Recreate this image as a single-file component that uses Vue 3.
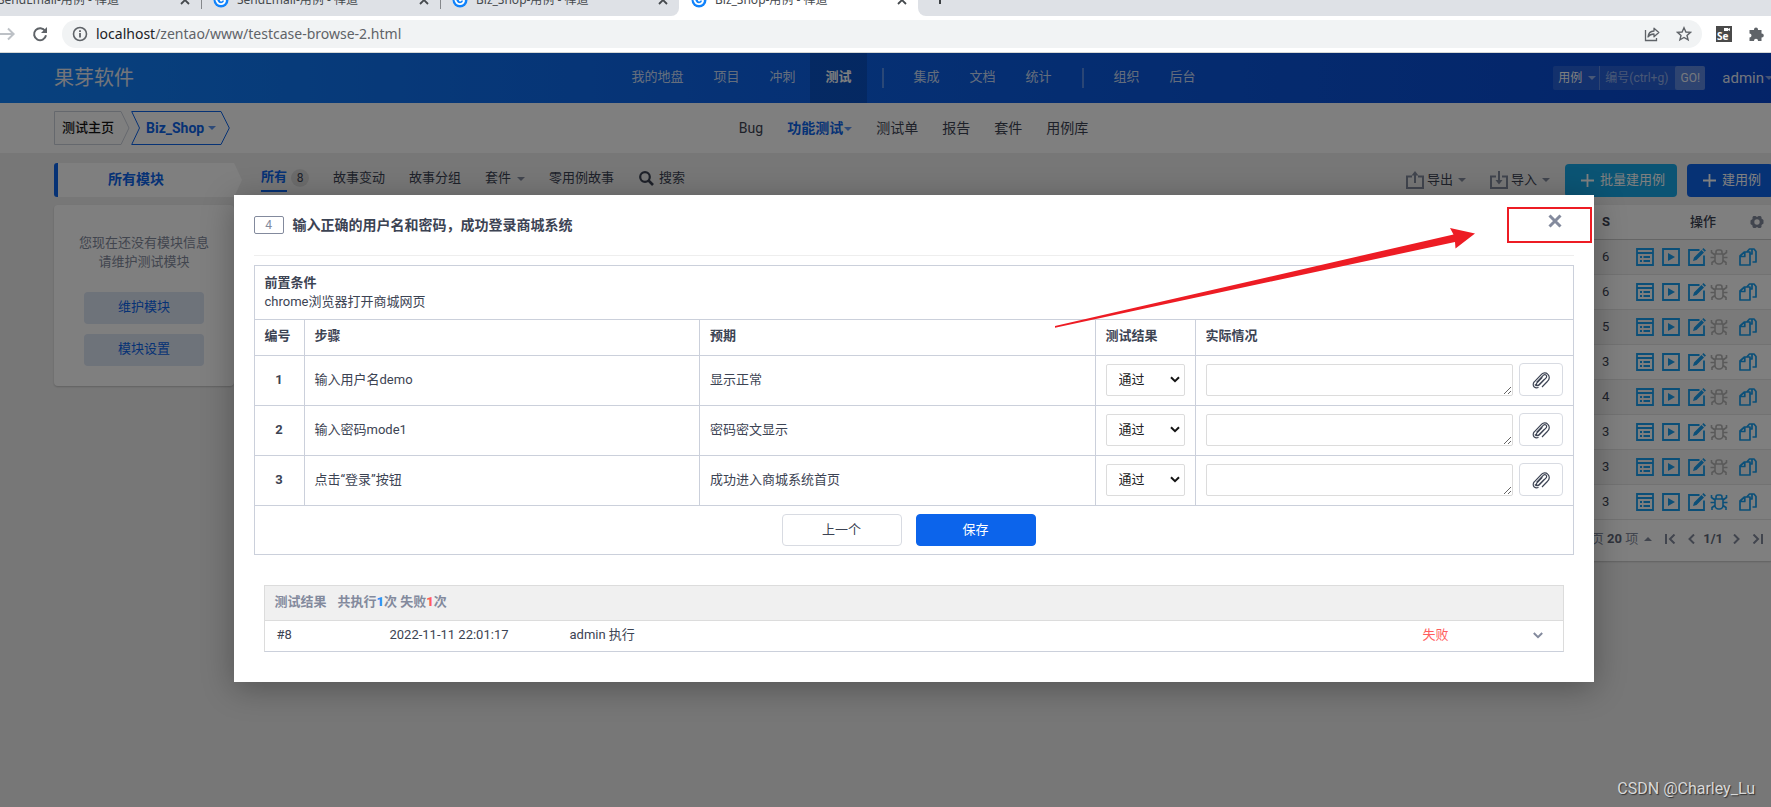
<script setup>
import { ref } from 'vue'

const tabs = [
  { title: 'SendEmail-用例 - 禅道', active: false },
  { title: 'SendEmail-用例 - 禅道', active: false },
  { title: 'Biz_Shop-用例 - 禅道', active: false },
  { title: 'Biz_Shop-用例 - 禅道', active: true }
]

const navGroups = [
  ['我的地盘', '项目', '冲刺', '测试'],
  ['集成', '文档', '统计'],
  ['组织', '后台']
]

const subMenu = ['Bug', '功能测试', '测试单', '报告', '套件', '用例库']

const cases = [
  { s: 6, bug: false },
  { s: 6, bug: false },
  { s: 5, bug: false },
  { s: 3, bug: false },
  { s: 4, bug: false },
  { s: 3, bug: false },
  { s: 3, bug: false },
  { s: 3, bug: true }
]

const steps = ref([
  { id: 1, desc: '输入用户名demo', expect: '显示正常', result: 'pass', real: '' },
  { id: 2, desc: '输入密码mode1', expect: '密码密文显示', result: 'pass', real: '' },
  { id: 3, desc: '点击“登录”按钮', expect: '成功进入商城系统首页', result: 'pass', real: '' }
])
</script>

<template>
  <div class="window">
    <div class="browser">
      <div class="tab-strip">
        <div v-for="(t, i) in tabs" :key="i" class="tab" :class="{ active: t.active, beside: i === 2 }">
          <svg class="favicon" viewBox="0 0 16 16" width="16" height="16">
            <circle cx="8" cy="8" r="7.5" fill="#1183fb" />
            <path d="M11.5 4.800A4.300 4.300 0 0 0 4 9.500a4.200 4.200 0 0 0 8-.500c.200-1.500-3-2-4.500.200" fill="none" stroke="#fff" stroke-width="1.800" />
          </svg>
          <span class="tab-title">{{ t.title }}</span>
          <button class="tab-close" aria-label="关闭标签页">
            <svg viewBox="0 0 10 10" width="10" height="10"><path d="M1 1l8 8M9 1l-8 8" stroke="#45494d" stroke-width="1.8" /></svg>
          </button>
        </div>
        <div class="tab-rest">
          <button class="tab-new" aria-label="新标签页">
            <svg viewBox="0 0 14 14" width="14" height="14"><path d="M7 1v12M1 7h12" stroke="#3c4043" stroke-width="2" /></svg>
          </button>
        </div>
      </div>
      <div class="address-bar">
        <svg viewBox="0 0 16 16" width="16" height="16"><path d="M0 8h13M8 2.5L13.6 8 8 13.5" fill="none" stroke="#bdc1c6" stroke-width="2" /></svg>
        <svg class="reload" viewBox="0 0 16 16" width="16" height="16">
          <path d="M13.2 5A6 6 0 1 0 14 9.3" fill="none" stroke="#5f6368" stroke-width="2" />
          <path d="M15 1v6H9z" fill="#5f6368" />
        </svg>
        <div class="omnibox">
          <svg viewBox="0 0 16 16" width="16" height="16">
            <circle cx="8" cy="8" r="6.5" fill="none" stroke="#5f6368" stroke-width="1.6" />
            <path d="M8 7v4.6M8 4.2v1.8" stroke="#5f6368" stroke-width="1.8" />
          </svg>
          <span class="url"><b>localhost</b>/zentao/www/testcase-browse-2.html</span>
          <svg class="share" viewBox="0 0 16 16" width="16" height="16">
            <path d="M1.5 4v10.5h11V12" fill="none" stroke="#5f6368" stroke-width="1.3" />
            <path d="M4 11c.3-4 2.5-5.800 6-6V2.200L14.800 6.500 10 10.800V8C7.500 8 5.500 8.800 4 11z" fill="none" stroke="#5f6368" stroke-width="1.3" stroke-linejoin="round" />
          </svg>
          <svg viewBox="0 0 16 16" width="16" height="16">
            <path d="M8 1.800l1.900 4.200 4.600.4-3.500 3 1.100 4.500L8 11.500l-4.100 2.400L5 9.400l-3.500-3 4.600-.4z" fill="none" stroke="#5f6368" stroke-width="1.4" />
          </svg>
        </div>
        <svg class="ext" viewBox="0 0 16 16" width="16" height="16">
          <rect width="16" height="16" fill="#4a4a4a" />
          <path d="M8 2h4v1l2-1v3l-2-1v1H8z" fill="#fff" />
          <text x="1" y="14" class="se">Se</text>
        </svg>
        <svg class="puzzle" viewBox="0 0 16 16" width="16" height="16">
          <path d="M6 3.500a2 2 0 0 1 4 0V4h3.500v3.500h.300a2 2 0 0 1 0 4h-.300V15H10v-.300a2 2 0 0 0-4 0V15H1.500v-3.500a2 2 0 0 0 0-4V4H6z" fill="#5f6368" />
        </svg>
      </div>
    </div>

    <div class="viewport">
      <div class="page">
        <header class="header">
          <div class="side"><a class="logo" href="#">果芽软件</a></div>
          <nav class="main-nav">
            <template v-for="(g, gi) in navGroups" :key="gi">
              <span v-if="gi" class="nav-divider"></span>
              <a v-for="n in g" :key="n" href="#" :class="{ current: n === '测试' }">{{ n }}</a>
            </template>
          </nav>
          <div class="side right">
            <form class="search" @submit.prevent>
              <button type="button" class="search-type">用例<i class="caret"></i></button>
              <input type="text" placeholder="编号(ctrl+g)" aria-label="编号" />
              <button type="submit" class="go">GO!</button>
            </form>
            <a class="user" href="#">admin<i class="caret"></i></a>
          </div>
        </header>

        <div class="subheader">
          <div class="side crumbs">
            <a href="#" class="crumb">
              <svg viewBox="0 0 76 34" width="76" height="34"><path d="M.5.500H67L75 17 67 33.500H.500z" fill="none" stroke="#cbd0db" /></svg>
              <span>测试主页</span>
            </a>
            <a href="#" class="crumb product">
              <svg viewBox="0 0 99 34" width="99" height="34"><path d="M.700.500H90L98.300 17 90 33.500H.700L8.500 17z" fill="none" stroke="#0c64eb" /></svg>
              <span>Biz_Shop<i class="caret"></i></span>
            </a>
          </div>
          <nav class="sub-nav">
            <a v-for="m in subMenu" :key="m" href="#" :class="{ current: m === '功能测试' }">{{ m }}<i v-if="m === '功能测试'" class="caret"></i></a>
          </nav>
          <div class="side"></div>
        </div>

        <div class="toolbar">
          <div class="module-title">
            <svg viewBox="0 0 188 34" width="188" height="34">
              <path d="M4 0H180L188 17 180 34H4z" fill="#fff" />
              <path d="M4 0H3a3 3 0 0 0-3 3v28a3 3 0 0 0 3 3h1z" fill="#0c64eb" />
            </svg>
            <span>所有模块</span>
          </div>
          <nav class="filters">
            <a href="#" class="all"><span>所有</span><em>8</em></a>
            <a href="#">故事变动</a>
            <a href="#">故事分组</a>
            <a href="#">套件<i class="caret"></i></a>
            <a href="#">零用例故事</a>
            <a href="#" class="find">
              <svg viewBox="0 0 15 15" width="15" height="15"><circle cx="6" cy="6" r="4.800" fill="none" stroke="#3c4353" stroke-width="2.200" /><path d="M9.500 9.500l4.500 4.500" stroke="#3c4353" stroke-width="2.600" /></svg>搜索
            </a>
          </nav>
          <div class="actions">
            <button class="link">
              <svg viewBox="0 0 18 18" width="18" height="18"><path d="M6 5.500H1V17h16V5.500h-5M9 12V2" fill="none" stroke="#838a9d" stroke-width="2" /><path d="M5.500 4.500L9 0l3.500 4.500z" fill="#838a9d" /></svg>
              导出<i class="caret"></i>
            </button>
            <button class="link">
              <svg viewBox="0 0 18 18" width="18" height="18"><path d="M6 5.500H1V17h16V5.500h-5M9 0v10" fill="none" stroke="#838a9d" stroke-width="2" /><path d="M5.500 9L9 13.500 12.500 9z" fill="#838a9d" /></svg>
              导入<i class="caret"></i>
            </button>
            <button class="solid cyan">
              <svg viewBox="0 0 13 13" width="13" height="13"><path d="M6.500 0v13M0 6.500h13" stroke="#fff" stroke-width="1.800" /></svg>批量建用例
            </button>
            <button class="solid">
              <svg viewBox="0 0 13 13" width="13" height="13"><path d="M6.500 0v13M0 6.500h13" stroke="#fff" stroke-width="1.800" /></svg>建用例
            </button>
          </div>
        </div>

        <div class="content">
          <aside class="sidebar">
            <p>您现在还没有模块信息<br />请维护测试模块</p>
            <button>维护模块</button>
            <button>模块设置</button>
          </aside>
          <main class="list">
            <table>
              <thead>
                <tr>
                  <td></td>
                  <th class="col-s">S</th>
                  <th class="col-ops">
                    <div>
                      <span>操作</span>
                      <svg viewBox="0 0 14 14" width="14" height="14"><path d="M3.500 1h2L7 2l1.500-1h2l1 1v1.500l2 1.500v3.500l-2 1.500V12l-1 1h-2L7 12l-1.500 1h-2l-1-1v-1.500L.500 9V5.500l2-1.500V2z" fill="#838a9d" /><circle cx="7" cy="7" r="2.700" fill="#fff" /></svg>
                    </div>
                  </th>
                </tr>
              </thead>
              <tbody>
                <tr v-for="(c, i) in cases" :key="i">
                  <td></td>
                  <td class="col-s">{{ c.s }}</td>
                  <td class="col-ops">
                    <div class="ops">
                      <button aria-label="结果">
                        <svg viewBox="0 0 18 18" width="18" height="18"><path d="M1 1h16v16H1zM1 5h16M7.500 9H14M7.500 13H14M4 9h2M4 13h2" fill="none" stroke="currentColor" stroke-width="1.800" /></svg>
                      </button>
                      <button aria-label="执行">
                        <svg viewBox="0 0 18 18" width="18" height="18"><path d="M1 1h16v16H1z" fill="none" stroke="currentColor" stroke-width="1.800" /><path d="M6 5l7 4-7 4z" fill="currentColor" /></svg>
                      </button>
                      <button aria-label="编辑">
                        <svg viewBox="0 0 18 18" width="18" height="18"><path d="M11.500 2H1v15h15V7.500" fill="none" stroke="currentColor" stroke-width="1.800" /><path d="M5 13l1-3.500 7.500-7.500 2.500 2.500L8.500 12zM14.200 1.300L15.500 0 18 2.500l-1.300 1.300z" fill="currentColor" /></svg>
                      </button>
                      <button aria-label="转Bug" :class="{ off: !c.bug }">
                        <svg viewBox="0 0 18 18" width="18" height="18"><path d="M5 6h8v6.500a3.500 3.500 0 0 1-3.500 3.500h-1A3.500 3.500 0 0 1 5 12.500zM6 6V4a2 2 0 0 1 2-2h2a2 2 0 0 1 2 2v2M1.500 2v2.500L5 7M16.500 2v2.500L13 7M.500 9.500H5M13 9.500h4.500M2 17v-2.500l3-2M16 17v-2.500l-3-2" fill="none" stroke="currentColor" stroke-width="1.600" /></svg>
                      </button>
                      <button aria-label="复制" class="copy">
                        <svg viewBox="0 0 18 18" width="18" height="18"><path d="M5.500 4H11v13H1V8zM5.800 4v4.500H1M8 3.800L10.500 1H15l2 2.500V14h-3.500M13 1.500V6h-2" fill="none" stroke="currentColor" stroke-width="1.700" stroke-linejoin="round" /></svg>
                      </button>
                    </div>
                  </td>
                </tr>
              </tbody>
            </table>
            <footer class="pager">
              <span>页 <b>20</b> 项</span>
              <i class="caret up"></i>
              <button aria-label="首页"><svg viewBox="0 0 11 10" width="11" height="10"><path d="M1 0v10M9.500.500L5 5l4.500 4.500" fill="none" stroke="#838a9d" stroke-width="2" /></svg></button>
              <button aria-label="上一页"><svg viewBox="0 0 7 10" width="7" height="10"><path d="M6 .500L1.500 5 6 9.500" fill="none" stroke="#838a9d" stroke-width="2" /></svg></button>
              <b>1/1</b>
              <button aria-label="下一页"><svg viewBox="0 0 7 10" width="7" height="10"><path d="M1 .500L5.500 5 1 9.500" fill="none" stroke="#838a9d" stroke-width="2" /></svg></button>
              <button aria-label="末页"><svg viewBox="0 0 11 10" width="11" height="10"><path d="M10 0v10M1.500.500L6 5 1.500 9.500" fill="none" stroke="#838a9d" stroke-width="2" /></svg></button>
            </footer>
          </main>
        </div>

        <div class="backdrop">
          <section class="modal" role="dialog" aria-labelledby="case-title">
            <header class="modal-head">
              <span class="case-id">4</span>
              <h2 id="case-title">输入正确的用户名和密码，成功登录商城系统</h2>
              <button class="close" aria-label="关闭">
                <svg viewBox="0 0 14 14" width="14" height="14"><path d="M1.500 1.500l11 11M12.500 1.500l-11 11" stroke="#838a9d" stroke-width="3" /></svg>
              </button>
            </header>
            <table class="steps">
              <colgroup>
                <col class="w-id" /><col /><col /><col class="w-result" /><col class="w-real" />
              </colgroup>
              <tbody>
                <tr>
                  <td colspan="5" class="pre"><b>前置条件</b><br />chrome浏览器打开商城网页</td>
                </tr>
                <tr class="heads">
                  <th>编号</th>
                  <th>步骤</th>
                  <th>预期</th>
                  <th>测试结果</th>
                  <th>实际情况</th>
                </tr>
                <tr v-for="s in steps" :key="s.id" class="step">
                  <th class="num">{{ s.id }}</th>
                  <td>{{ s.desc }}</td>
                  <td>{{ s.expect }}</td>
                  <td>
                    <div class="pick">
                      <select v-model="s.result" aria-label="测试结果">
                        <option value="pass">通过</option>
                        <option value="fail">失败</option>
                      </select>
                      <svg viewBox="0 0 10 7" width="10" height="7"><path d="M1 1.200l4 4 4-4" fill="none" stroke="#141414" stroke-width="2" /></svg>
                    </div>
                  </td>
                  <td>
                    <div class="real">
                      <textarea v-model="s.real" rows="1" aria-label="实际情况"></textarea>
                      <button aria-label="附件">
                        <svg viewBox="0 0 18 18" width="18" height="18"><path d="M4.500 11.500l7-7.300a1.800 1.800 0 0 1 2.600 2.600l-6.500 6.700a3.300 3.300 0 0 1-4.800 0M12.500 8.200L6.700 14a1.300 1.300 0 0 1-1.900-1.900L10.500 6M10 16l5.300-5.500a4.800 4.800 0 0 0 .4-7.400 4.200 4.200 0 0 0-6 .1L2.300 10.800a3.600 3.600 0 0 0 0 5.200 3.400 3.400 0 0 0 4.200.3" fill="none" stroke="#3c4353" stroke-width="1.200" /></svg>
                      </button>
                    </div>
                  </td>
                </tr>
                <tr>
                  <td colspan="5" class="submit">
                    <div>
                      <button>上一个</button>
                      <button class="primary">保存</button>
                    </div>
                  </td>
                </tr>
              </tbody>
            </table>
            <div class="results">
              <div class="results-head">测试结果<span>共执行<b class="blue">1</b>次 失败<b class="red">1</b>次</span></div>
              <div class="results-row">
                <span class="r-id">#8</span>
                <span class="r-date">2022-11-11 22:01:17</span>
                <span class="r-user">admin 执行</span>
                <span class="r-state">失败</span>
                <button aria-label="展开"><svg viewBox="0 0 10 7" width="10" height="7"><path d="M.800 1l4.200 4.200L9.200 1" fill="none" stroke="#838a9d" stroke-width="2" /></svg></button>
              </div>
            </div>
            <div class="callout"></div>
            <svg class="arrow" viewBox="0 0 420 100" width="420" height="100">
              <path d="M0 98L398.500 6.500 395 0 420 5.500 400.500 20.500 400 14 0 99.800z" fill="#ed1c24" />
            </svg>
          </section>
        </div>
      </div>
      <div class="watermark">CSDN @Charley_Lu</div>
    </div>
  </div>
</template>

<style>
body {
  margin: 0;
  overflow: hidden;
}
</style>

<style scoped>
* {
  box-sizing: border-box;
}
.window {
  display: flex;
  flex-direction: column;
  min-height: 100vh;
  overflow: hidden;
  font-family: Roboto, "Noto Sans CJK SC", sans-serif;
  font-size: 13px;
  line-height: 20px;
  color: #3c4353;
}
a {
  color: inherit;
  text-decoration: none;
}
button {
  font: inherit;
  color: inherit;
  background: none;
  border: 0;
  padding: 0;
  cursor: pointer;
}
svg {
  display: block;
  flex: none;
}
.caret {
  display: inline-block;
  border: 4px solid transparent;
  border-top-color: #838a9d;
  border-bottom: 0;
  vertical-align: middle;
}
.caret.up {
  border-top: 0;
  border-bottom: 4px solid #838a9d;
}

/* browser bar */
.browser {
  background: #fff;
  border-bottom: 1px solid #d5d8d6;
  font-family: "Noto Sans", "Noto Sans CJK SC", sans-serif;
}
.tab-strip {
  display: flex;
  height: 16px;
  overflow: hidden;
  background: #fff;
  margin-left: -38px;
}
.tab {
  display: flex;
  align-items: center;
  width: 239px;
  height: 32px;
  margin-top: -16px;
  padding: 0 11px 0 12px;
  background: #dee1e6;
  font-size: 12px;
  color: #45494d;
}
.tab + .tab:not(.active) {
  background: linear-gradient(#85888c, #85888c) 0 8px / 1px 17px no-repeat #dee1e6;
}
.tab.active {
  background: #fff;
}
.tab.beside {
  border-bottom-right-radius: 8px;
}
.tab-title {
  flex: 1;
  margin-left: 8px;
  white-space: nowrap;
}
.tab-rest {
  flex: 1;
  display: flex;
  align-items: center;
  height: 32px;
  margin-top: -16px;
  padding-left: 15px;
  background: #dee1e6;
  border-bottom-left-radius: 8px;
}
.tab-new {
  padding-bottom: 4px;
}
.address-bar {
  display: flex;
  align-items: center;
  height: 36px;
  padding-right: 7px;
}
.reload {
  margin: 0 14px 0 16px;
}
.omnibox {
  flex: 1;
  display: flex;
  align-items: center;
  height: 28px;
  margin-right: 14px;
  padding: 0 10px;
  border-radius: 14px;
  background: #f1f3f4;
}
.url {
  flex: 1;
  margin-left: 8px;
  font-size: 14px;
  color: #5f6368;
}
.url b {
  font-weight: 400;
  color: #202124;
}
.share {
  margin-right: 16px;
}
.ext {
  margin-right: 16px;
}
.se {
  font-family: "Noto Sans", sans-serif;
  font-size: 10px;
  font-weight: 700;
  fill: #fff;
}

/* page */
.viewport {
  position: relative;
  flex: 1;
  display: flex;
  overflow: hidden;
}
.page {
  position: relative;
  flex: none;
  width: calc(100% + 56px);
  background: #efefef;
}
.header,
.subheader {
  display: flex;
  align-items: center;
  height: 50px;
  padding: 0 54px;
}
.side {
  flex: 1 1 0;
  display: flex;
  align-items: center;
}
.side.right {
  justify-content: flex-end;
}
.header {
  background: linear-gradient(90deg, #1183fb 0%, #0c64eb 40%, #0846cf 100%);
  color: #fff;
}
.logo {
  font-size: 20px;
  color: #e6ebf5;
}
.main-nav {
  display: flex;
  align-items: center;
}
.main-nav a {
  padding: 0 15px;
  line-height: 48px;
  padding-bottom: 2px;
  color: rgba(255, 255, 255, 0.8);
}
.main-nav a.current {
  font-weight: 700;
  color: #fff;
  background: rgba(0, 0, 0, 0.15);
}
.nav-divider {
  width: 2px;
  height: 20px;
  margin: 0 15px;
  background: rgba(255, 255, 255, 0.3);
}
.header .caret {
  border-top-color: rgba(255, 255, 255, 0.5);
}
.search {
  display: flex;
  height: 24px;
  font-size: 12px;
  line-height: 24px;
  background: rgba(255, 255, 255, 0.12);
  border-radius: 2px;
}
.search-type {
  display: flex;
  align-items: center;
  gap: 6px;
  padding: 0 3px 0 5px;
  border-right: 1px solid rgba(255, 255, 255, 0.25);
}
.search input {
  width: 75px;
  padding: 0 0 0 5px;
  border: 0;
  background: none;
  color: #fff;
  font: inherit;
}
.search input::placeholder {
  color: rgba(255, 255, 255, 0.5);
}
.go {
  width: 30px;
  border-radius: 2px;
  background: rgba(255, 255, 255, 0.25);
  color: rgba(255, 255, 255, 0.9);
}
.user {
  display: flex;
  align-items: center;
  gap: 1px;
  margin-left: 17px;
  font-size: 15px;
  color: rgba(255, 255, 255, 0.9);
}
.subheader {
  background: #fff;
}
.crumbs {
  gap: 1px;
}
.crumb {
  display: grid;
  align-items: center;
  font-weight: 500;
  color: #141414;
}
.crumb > * {
  grid-area: 1 / 1;
}
.crumb span {
  display: flex;
  align-items: center;
  gap: 4px;
  padding-left: 8px;
}
.crumb.product {
  color: #0c64eb;
  font-size: 14px;
  font-weight: 700;
}
.crumb.product span {
  padding-left: 15px;
}
.product .caret,
.sub-nav .caret {
  border-top-color: #5c95f1;
}
.sub-nav {
  display: flex;
  gap: 24px;
  font-size: 14px;
}
.sub-nav .caret {
  margin-left: 1px;
}
.sub-nav .current {
  font-weight: 700;
  color: #0c64eb;
}
.toolbar {
  display: flex;
  align-items: center;
  height: 34px;
  margin: 10px 54px 8px;
}
.module-title {
  display: grid;
  align-items: center;
  width: 188px;
  font-size: 14px;
  font-weight: 700;
  color: #0c64eb;
}
.module-title > * {
  grid-area: 1 / 1;
}
.module-title span {
  padding: 0 0 2px 54px;
}
.filters {
  flex: 1;
  display: flex;
  align-items: center;
  gap: 24px;
  height: 34px;
  padding-bottom: 4px;
  margin-left: 19px;
}
.filters .caret {
  margin-left: 6px;
}
.all {
  display: flex;
  align-items: center;
  gap: 4px;
}
.all span {
  font-weight: 700;
  color: #0c64eb;
  line-height: 26px;
  border-bottom: 2px solid #0c64eb;
}
.all em {
  width: 18px;
  height: 18px;
  border-radius: 9px;
  background: #d9d9d9;
  font-size: 12px;
  font-style: normal;
  line-height: 18px;
  text-align: center;
}
.find {
  display: flex;
  align-items: center;
  gap: 5px;
  margin-left: 1px;
}
.actions {
  display: flex;
  align-items: center;
}
.link {
  display: flex;
  align-items: center;
  gap: 3px;
  margin-right: 24px;
}
.link .caret {
  margin-left: 2px;
}
.link + .solid {
  margin-left: -9px;
}
.solid {
  display: flex;
  align-items: center;
  gap: 6px;
  height: 33px;
  padding: 0 12px 0 16px;
  border-radius: 4px;
  background: #0c64eb;
  color: #fff;
}
.solid.cyan {
  margin-right: 10px;
  background: #16a8e8;
}
.content {
  display: flex;
  align-items: flex-start;
  gap: 27px;
  margin: 0 54px;
}
.sidebar {
  display: flex;
  flex-direction: column;
  align-items: center;
  gap: 10px;
  width: 180px;
  height: 181px;
  padding-top: 28px;
  border-radius: 4px;
  background: #fff;
  box-shadow: 0 1px 2px rgba(0, 0, 0, 0.2);
  text-align: center;
  color: #838a9d;
}
.sidebar p {
  margin: 0 0 11px;
  line-height: 19px;
}
.sidebar button {
  width: 120px;
  height: 32px;
  padding-bottom: 2px;
  border-radius: 4px;
  background: #dce6f4;
  color: #0c64eb;
}
.list {
  flex: 1;
  background: #fff;
  border-radius: 4px;
  box-shadow: 0 1px 2px rgba(0, 0, 0, 0.2);
}
.list table {
  width: 100%;
  border-collapse: collapse;
}
.list tr {
  height: 35px;
}
.list thead tr {
  height: 34px;
}
.list td,
.list th {
  padding: 0;
  border-bottom: 1px solid #e5e5e5;
}
.list thead tr > * {
  border-bottom-color: #cbcbcb;
}
.list tbody tr:nth-child(odd) {
  background: #f5f5f5;
}
.col-s {
  width: 34px;
  text-align: left;
}
.col-ops {
  width: 137px;
}
.col-ops > div {
  display: flex;
  align-items: center;
}
th.col-ops > div {
  justify-content: flex-end;
  gap: 34px;
  padding-right: 9px;
  font-weight: 500;
}
.ops {
  gap: 8px;
  color: #169ef0;
}
.ops .off {
  color: #b4b4b4;
}
.ops button:nth-child(4) {
  margin-left: -4px;
}
.ops .copy {
  margin-left: 3px;
}
.pager {
  display: flex;
  align-items: center;
  justify-content: flex-end;
  height: 41px;
  padding: 0 10px 3px 0;
  color: #838a9d;
}
.pager .caret {
  margin: 0 13px 0 6px;
}
.pager b {
  color: #606779;
}
.pager button + button {
  margin-left: 12px;
}
.pager button + b {
  margin: 0 10px 0 8px;
}

/* dialog */
.backdrop {
  position: absolute;
  inset: 0;
  background: rgba(0, 0, 0, 0.5);
}
.modal {
  position: relative;
  width: 94%;
  max-width: 1360px;
  margin: 142px auto 0;
  padding: 0 20px 30px;
  background: #fff;
  box-shadow: 0 6px 30px rgba(0, 0, 0, 0.3);
}
.modal-head {
  display: flex;
  align-items: center;
  height: 61px;
  border-bottom: 1px solid #eee;
}
.case-id {
  width: 30px;
  height: 18px;
  border: 1px solid #838a9d;
  border-radius: 2px;
  font-size: 12px;
  line-height: 16px;
  text-align: center;
  color: #838a9d;
}
.modal-head h2 {
  flex: 1;
  margin: 0 0 0 9px;
  font-size: 14px;
  font-weight: 700;
}
.close {
  align-self: flex-start;
  margin: 19px 12px 0 0;
}
.steps {
  width: 100%;
  margin-top: 9px;
  border-collapse: collapse;
  table-layout: fixed;
}
.w-id {
  width: 50px;
}
.w-result {
  width: 100px;
}
.w-real {
  width: 378px;
}
.steps td,
.steps th {
  padding: 0 10px 2px;
  border: 1px solid #cbd0db;
  text-align: left;
}
.steps td.pre {
  height: 54px;
  line-height: 19px;
}
.heads th {
  height: 36px;
}
.steps .heads th {
  padding-bottom: 4px;
}
.step > * {
  height: 50px;
}
.steps th.num {
  text-align: center;
}
.pick {
  display: grid;
  align-items: center;
}
.pick > * {
  grid-area: 1 / 1;
}
.pick svg {
  justify-self: end;
  margin-right: 5px;
  pointer-events: none;
}
.pick select {
  appearance: none;
  width: 100%;
  height: 32px;
  padding: 0 12px;
  border: 1px solid #dcdcdc;
  border-radius: 2px;
  background: #fff;
  color: #222;
  font: inherit;
}
.real {
  display: flex;
  align-items: center;
  gap: 6px;
}
.real textarea {
  flex: 1;
  min-width: 0;
  height: 32px;
  padding: 5px 8px;
  border: 1px solid #dcdcdc;
  border-radius: 2px;
  font: inherit;
  resize: vertical;
}
.real button {
  display: grid;
  place-items: center;
  width: 44px;
  height: 33px;
  border: 1px solid #d8dbe2;
  border-radius: 4px;
}
.steps td.submit {
  height: 49px;
  padding: 0 20px 0 10px;
}
.submit div {
  display: flex;
  justify-content: center;
  gap: 14px;
}
.submit button {
  width: 120px;
  height: 32px;
  border: 1px solid #d8dbe2;
  border-radius: 4px;
}
.submit .primary {
  border-color: #0c64eb;
  background: #0c64eb;
  color: #fff;
}
.results {
  margin: 30px 10px 0;
  border: 1px solid #dcdcdc;
  border-bottom-color: #cbd0db;
}
.results-head {
  height: 35px;
  padding: 0 10px;
  border-bottom: 1px solid #dcdcdc;
  background: #f0f0f0;
  color: #838a9d;
  font-weight: 700;
  line-height: 32px;
}
.results-head span {
  margin-left: 11px;
}
.blue {
  color: #2e8ff5;
}
.red {
  color: #ff5d5d;
}
.results-row {
  display: flex;
  align-items: center;
  height: 30px;
  padding: 0 20px 2px 12px;
}
.r-id {
  width: 113px;
}
.r-date {
  width: 180px;
}
.r-user {
  flex: 1;
}
.r-state {
  width: 110px;
  color: #ff5d5d;
}
.callout {
  position: absolute;
  top: 12px;
  right: 2px;
  width: 85px;
  height: 36px;
  border: 2px solid #ed1c24;
  pointer-events: none;
}
.arrow {
  position: absolute;
  top: 33px;
  right: 119px;
  pointer-events: none;
}
.watermark {
  position: absolute;
  right: 16px;
  bottom: 8px;
  font-size: 16px;
  color: #d8d8d8;
  text-shadow: 1px 1px 1px #333;
}
</style>
